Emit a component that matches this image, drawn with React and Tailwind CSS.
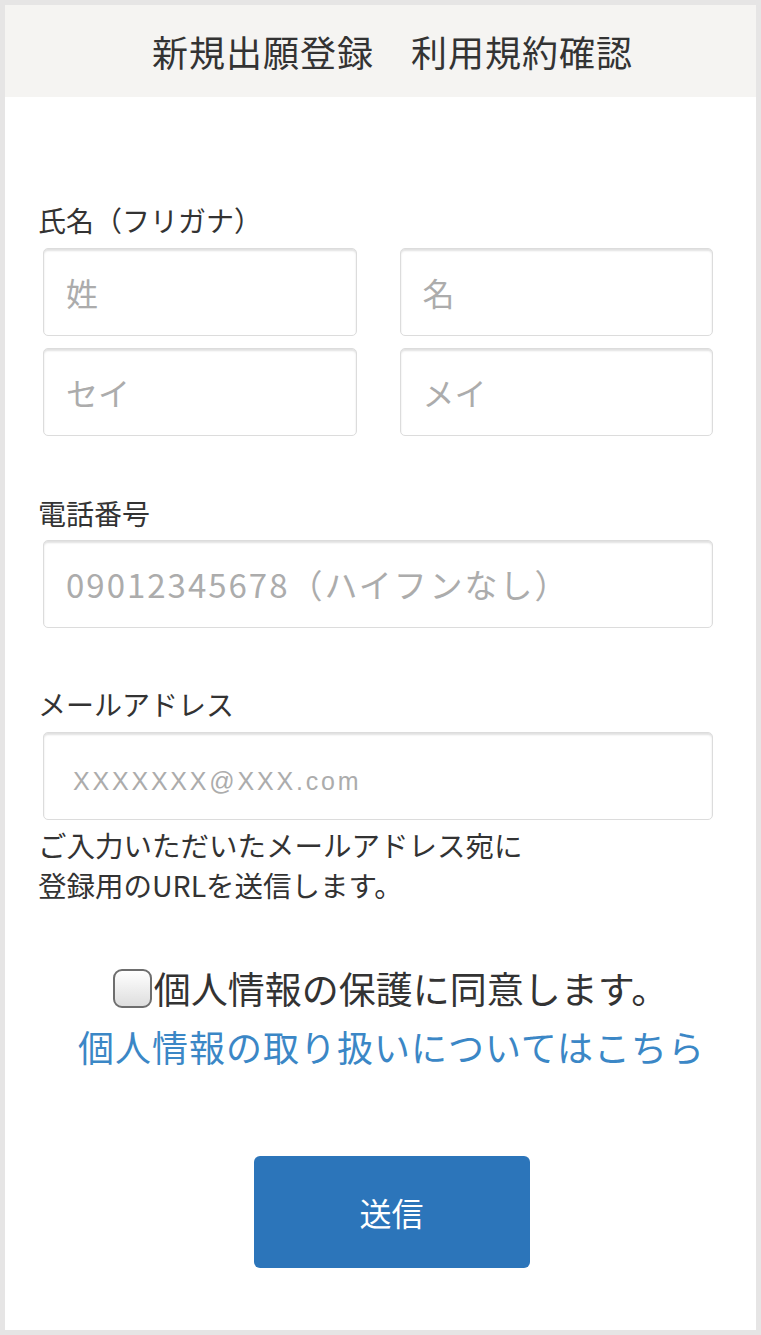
import { useState } from "react";

const jp = { fontFamily: '"Noto Sans CJK JP", "Noto Sans", sans-serif' };

const inputClass =
    "block w-full h-[88px] rounded-[5px] border border-[#dcdcdc] bg-white pl-[22px] text-[32px] text-[#333] shadow-[inset_0_2px_2px_rgba(0,0,0,0.12)] outline-none placeholder:text-[#acacac]";

function Label({ children, className = "" }) {
    return (
        <div className={"text-[28px] leading-[40px] text-[#333] " + className}>
            {children}
        </div>
    );
}

export default function App() {
    const [agree, setAgree] = useState(false);

    return (
        <div
            className="h-[1335px] w-[761px] border-[5px] border-[#e6e5e5] bg-white"
            style={jp}
        >
            {/* ヘッダー */}
            <div className="flex h-[92px] items-center justify-center bg-[#f5f4f2] pl-[24px]">
                <h1 className="text-[36px] font-normal text-[#333] tracking-[1px]">
                    新規出願登録　利用規約確認
                </h1>
            </div>

            <div className="pl-[33px] pr-[38px] pt-[103px]">
                <Label>氏名（フリガナ）</Label>
                <div className="mx-[5px] mt-[8px] grid grid-cols-2 gap-x-[43px] gap-y-[12px]">
                    <input className={inputClass} placeholder="姓" />
                    <input className={inputClass} placeholder="名" />
                    <input className={inputClass} placeholder="セイ" />
                    <input className={inputClass} placeholder="メイ" />
                </div>

                <Label className="mt-[57px]">電話番号</Label>
                <div className="mx-[5px] mt-[7px]">
                    <input
                        className={inputClass + " !text-[33px] tracking-[2px]"}
                        placeholder="09012345678（ハイフンなし）"
                    />
                </div>

                <Label className="mt-[56px]">メールアドレス</Label>
                <div className="mx-[5px] mt-[8px]">
                    <input
                        className={inputClass + " !pl-[29px] !pt-[10px] !text-[25px] tracking-[2.8px]"}
                        style={{
                            fontFamily:
                                '"Liberation Sans", "Noto Sans CJK JP", sans-serif',
                        }}
                        placeholder="XXXXXXX@XXX.com"
                    />
                </div>
                <p className="mt-[5px] text-[28.5px] leading-[40px] text-[#333]">
                    ご入力いただいたメールアドレス宛に
                    <br />
                    登録用のURLを送信します。
                </p>
            </div>

            {/* 同意・送信 */}
            <div className="flex flex-col items-center pl-[22px] pt-[54px]">
                <label className="mr-[2px] flex cursor-pointer items-center text-[37px] leading-[58px] text-[#333]">
                    <input
                        type="checkbox"
                        checked={agree}
                        onChange={(e) => setAgree(e.target.checked)}
                        className="mr-[2px] h-[39px] w-[39px] cursor-pointer appearance-none rounded-[9px] border-[2px] border-[#6e6e6e] bg-gradient-to-b from-white to-[#dedede] checked:bg-[#2c75ba]"
                    />
                    個人情報の保護に同意します。
                </label>
                <a
                    href="#"
                    className="text-[36px] leading-[58px] text-[#3b87c6] tracking-[1px]"
                >
                    個人情報の取り扱いについてはこちら
                </a>

                <button
                    type="button"
                    className="mt-[81px] flex h-[112px] w-[276px] items-center justify-center rounded-[6px] bg-[#2c75ba] text-[32px] text-white"
                >
                    送信
                </button>
            </div>
        </div>
    );
}
